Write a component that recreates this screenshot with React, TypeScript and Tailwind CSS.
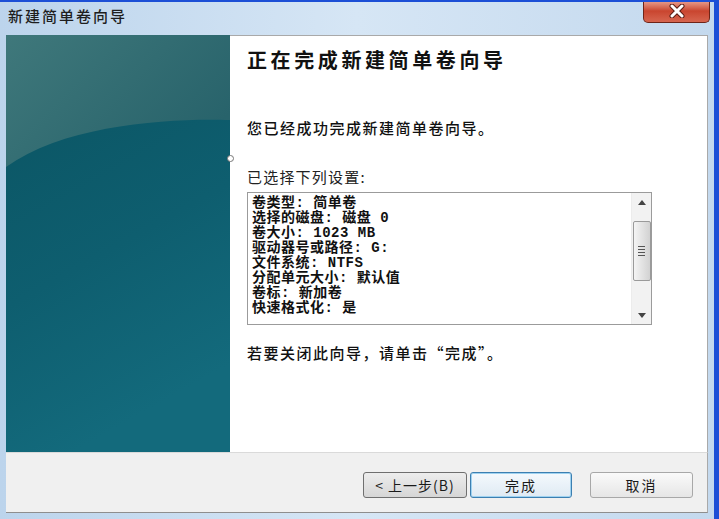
const CJK = "font-['Noto_Sans_CJK_SC','Noto_Sans',sans-serif]";

const settings = [
  "卷类型: 简单卷",
  "选择的磁盘: 磁盘 0",
  "卷大小: 1023 MB",
  "驱动器号或路径: G:",
  "文件系统: NTFS",
  "分配单元大小: 默认值",
  "卷标: 新加卷",
  "快速格式化: 是",
];

function TealPanel() {
  return (
    <div className="w-[224px] h-full shrink-0 border-r border-[#5d8c93]">
      <svg width="224" height="417" viewBox="0 0 224 417" className="block">
        <defs>
          <linearGradient id="lower" x1="0" y1="0" x2="0.3" y2="1">
            <stop offset="0" stopColor="#0a5361" />
            <stop offset="0.6" stopColor="#0e5e6f" />
            <stop offset="1" stopColor="#136a7c" />
          </linearGradient>
          <linearGradient id="upper" x1="0" y1="0" x2="1" y2="0.6">
            <stop offset="0" stopColor="#3f787b" />
            <stop offset="1" stopColor="#28636b" />
          </linearGradient>
        </defs>
        <rect width="224" height="417" fill="url(#lower)" />
        <path d="M0 0 H224 V85 C170 83 60 88 0 132 Z" fill="url(#upper)" />
      </svg>
    </div>
  );
}

function ScrollBar() {
  return (
    <div className="w-[20px] h-full flex flex-col items-center bg-[#f2f2f2] border-l border-[#ececec]">
      <div className="h-[18px] w-full flex items-center justify-center">
        <svg width="8" height="5" viewBox="0 0 8 5">
          <path d="M0 5 L4 0 L8 5 Z" fill="#444" />
        </svg>
      </div>
      <div className="mt-[10px] w-[18px] h-[60px] rounded-[2px] border border-[#9a9a9a] bg-gradient-to-r from-[#f4f4f4] via-[#e3e3e3] to-[#d2d2d2] flex items-center justify-center">
        <div className="flex flex-col gap-[2px]">
          <div className="w-[7px] h-[1px] bg-[#555]" />
          <div className="w-[7px] h-[1px] bg-[#555]" />
          <div className="w-[7px] h-[1px] bg-[#555]" />
          <div className="w-[7px] h-[1px] bg-[#555]" />
        </div>
      </div>
      <div className="flex-1" />
      <div className="h-[18px] w-full flex items-center justify-center">
        <svg width="8" height="5" viewBox="0 0 8 5">
          <path d="M0 0 L8 0 L4 5 Z" fill="#444" />
        </svg>
      </div>
    </div>
  );
}

function WinButton({ label, primary, left }: { label: string; primary?: boolean; left?: boolean }) {
  return (
    <button
      className={
        "h-[26px] rounded-[3px] border text-[14px] text-[#1a1a1a] flex items-center justify-center " +
        (primary
          ? "w-[102px] border-[#3c7fb1] bg-gradient-to-b from-[#f4f9fd] to-[#dfeaf3] shadow-[inset_0_0_0_1px_#9fd2f0] tracking-[2px]"
          : left
          ? "w-[104px] border-[#6f6f6f] bg-gradient-to-b from-[#ededed] to-[#d6d6d6] tracking-[1px]"
          : "w-[103px] border-[#a8a8a8] bg-gradient-to-b from-[#fafafa] to-[#e6e6e6] tracking-[2px]")
      }
    >
      {label}
    </button>
  );
}

export default function App() {
  return (
    <div
      className={
        "relative w-[719px] h-[519px] overflow-hidden border-t-2 border-r-[5px] border-[#1c4fd6] bg-gradient-to-r from-[#bcd4ec] via-[#d6e6f5] to-[#c4d9ee] " +
        CJK
      }
    >
      {/* title bar */}
      <div className="h-[33px] pl-[8px] pt-[4px] text-[15px] leading-[20px] tracking-[2px] text-[#1e1e1e] font-medium">
        新建简单卷向导
      </div>

      {/* close button */}
      <div className="absolute top-[-2px] right-[4px] w-[67px] h-[23px] rounded-b-[5px] border border-t-0 border-[#6e2418] bg-gradient-to-b from-[#e9a798] via-[#c9452f] to-[#d6654f] flex items-center justify-center">
        <svg width="16" height="14" viewBox="0 0 16 14">
          <path d="M3 2 L13 12 M13 2 L3 12" stroke="#5a1d14" strokeWidth="5" strokeLinecap="round" />
          <path d="M3 2 L13 12 M13 2 L3 12" stroke="#ffffff" strokeWidth="3" strokeLinecap="round" />
        </svg>
      </div>

      <div className="ml-[6px] w-[702px] flex flex-col">
        <div className="h-[417px] flex">
          <TealPanel />
          <div className="flex-1 bg-white border-t border-r border-[#a9a9a9] pl-[17px] text-[#111]">
            <div className="mt-[11px] text-[20px] leading-[26px] tracking-[3.6px] font-bold">
              正在完成新建简单卷向导
            </div>
            <div className="mt-[45px] text-[15px] leading-[20px] tracking-[1.5px] font-medium">
              您已经成功完成新建简单卷向导。
            </div>
            <div className="mt-[29px] text-[15px] leading-[20px] tracking-[1.2px] text-[#222]">
              已选择下列设置:
            </div>
            <div className="mt-[5px] w-[405px] h-[133px] border border-[#9b9b9b] flex">
              <div className="flex-1 overflow-hidden pl-[4px] pt-[3px] text-[14px] leading-[15px] tracking-[0.5px] font-['Liberation_Mono','Noto_Sans_CJK_SC',monospace] font-semibold whitespace-pre">
                {settings.map((s) => (
                  <div key={s}>{s}</div>
                ))}
              </div>
              <ScrollBar />
            </div>
            <div className="mt-[18px] text-[15px] leading-[20px] tracking-[1.5px] font-medium">
              若要关闭此向导，请单击“完成”。
            </div>
          </div>
        </div>

        {/* button bar */}
        <div className="h-[61px] bg-[#f0f0f0] border-t border-[#dadada] border-r border-b border-r-[#a9a9a9] border-b-[#8e8e8e] flex justify-end items-start pt-[19px] pr-[14px]">
          <WinButton label="< 上一步(B)" left />
          <div className="w-[3px]" />
          <WinButton label="完成" primary />
          <div className="w-[18px]" />
          <WinButton label="取消" />
        </div>
      </div>

      {/* mouse cursor ring */}
      <div className="absolute left-[227px] top-[153px] w-[7px] h-[7px] rounded-full border border-[#777] bg-white" />
    </div>
  );
}
